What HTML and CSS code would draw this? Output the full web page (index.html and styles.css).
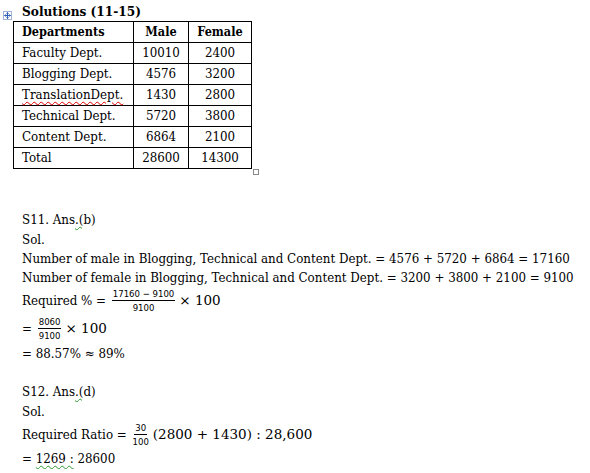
FILE: index.html
```html
<!DOCTYPE html>
<html>
<head>
<meta charset="utf-8">
<link rel="stylesheet" href="styles.css">
</head>
<body>
<div class="doc">
  <div class="table-block">
    <span class="move-handle"><svg width="9" height="9" viewBox="0 0 9 9"><rect x="0.5" y="0.5" width="8" height="8" fill="#fff" stroke="#9fb3d6"/><path d="M4.5 1.5v6M1.5 4.5h6M3.5 2.5l1-1 1 1M3.5 6.5l1 1 1-1M2.5 3.5l-1 1 1 1M6.5 3.5l1 1-1 1" stroke="#2f5fbf" fill="none" stroke-width="1"/></svg></span>
    <div class="title">Solutions (11-15)</div>
    <table class="data">
      <tr><th class="dept">Departments</th><th class="male">Male</th><th class="female">Female</th></tr>
      <tr><td class="dept">Faculty Dept.</td><td>10010</td><td>2400</td></tr>
      <tr><td class="dept">Blogging Dept.</td><td>4576</td><td>3200</td></tr>
      <tr><td class="dept"><span class="spell">TranslationDept.</span></td><td>1430</td><td>2800</td></tr>
      <tr><td class="dept">Technical Dept.</td><td>5720</td><td>3800</td></tr>
      <tr><td class="dept">Content Dept.</td><td>6864</td><td>2100</td></tr>
      <tr><td class="dept">Total</td><td>28600</td><td>14300</td></tr>
    </table>
    <span class="resize-handle"></span>
  </div>

  <div class="sol s11">
    <p class="h20">S11. Ans<span class="gram">.(</span>b)</p>
    <p class="h20">Sol.</p>
    <p class="h18">Number of male in Blogging, Technical and Content Dept. = 4576 + 5720 + 6864 = 17160</p>
    <p class="h20">Number of female in Blogging, Technical and Content Dept. = 3200 + 3800 + 2100 = 9100</p>
    <p class="h26">Required % = <span class="frac"><span class="num">17160 − 9100</span><span class="den">9100</span></span><span class="math">× 100</span></p>
    <p class="h30">= <span class="frac"><span class="num">8060</span><span class="den">9100</span></span><span class="math">× 100</span></p>
    <p class="h20">= 88.57% ≈ 89%</p>
  </div>

  <div class="sol s12">
    <p class="h20">S12. Ans<span class="gram">.(</span>d)</p>
    <p class="h20">Sol.</p>
    <p class="h26">Required Ratio = <span class="frac"><span class="num">30</span><span class="den">100</span></span><span class="math">(2800 + 1430) : 28,600</span></p>
    <p class="h22">= <span class="gram">1269 :</span> 28600</p>
  </div>
</div>
</body>
</html>
```

FILE: styles.css
```css
html, body {
  margin: 0;
  padding: 0;
  background: #fff;
}
body {
  font-family: "DejaVu Serif Condensed", "DejaVu Serif", serif;
  font-stretch: condensed;
  font-size: 13.2px;
  color: #000;
}
.doc {
  padding: 3px 0 0 0;
}
.table-block {
  position: relative;
  padding-left: 13px;
  width: 245px;
}
.move-handle {
  position: absolute;
  left: 3px;
  top: 8px;
  width: 9px;
  height: 9px;
  line-height: 0;
}
.title {
  font-weight: bold;
  font-size: 13.5px;
  margin-left: 9px;
  height: 18px;
  line-height: 16px;
}
.data {
  border-collapse: collapse;
  font-size: 13.2px;
  table-layout: fixed;
}
.data th, .data td {
  border: 1px solid #000;
  height: 20px;
  padding: 0;
  text-align: center;
  line-height: 18px;
  white-space: nowrap;
}
.data th {
  font-weight: bold;
  font-size: 12.6px;
}
.data .dept {
  text-align: left;
  padding-left: 8px;
  width: 111px;
}
.data .male {
  width: 54px;
}
.data .female {
  width: 62px;
}
.resize-handle {
  position: absolute;
  left: 253px;
  bottom: -6px;
  width: 4px;
  height: 4px;
  border: 1px solid #8a8a8a;
  background: #fff;
}
.sol {
  padding-left: 22px;
}
.sol p {
  margin: 0;
  display: flex;
  align-items: center;
  white-space: pre;
}
.s11 {
  margin-top: 40px;
}
.s12 {
  margin-top: 18px;
}
.h18 { height: 18px; }
.h20 { height: 20px; }
.h22 { height: 22px; }
.h26 { height: 26px; }
.h30 { height: 30px; }
.frac {
  display: inline-flex;
  flex-direction: column;
  align-items: center;
  font-family: "DejaVu Sans Condensed", "DejaVu Sans", sans-serif;
  font-stretch: condensed;
  font-size: 9.5px;
  line-height: 11px;
  margin: 0 2px 0 2px;
}
.frac .num {
  padding: 0 1px 1px;
  border-bottom: 1px solid #000;
}
.frac .den {
  padding-top: 1px;
}
.math {
  font-family: "DejaVu Serif", serif;
  font-stretch: normal;
  font-size: 13.5px;
  margin-left: 2px;
}
.spell {
  text-decoration: underline wavy #e00000;
  text-decoration-thickness: 1px;
  text-underline-offset: 2px;
}
.gram {
  text-decoration: underline wavy #2e9a2e;
  text-decoration-thickness: 1px;
  text-underline-offset: 2px;
}
```
